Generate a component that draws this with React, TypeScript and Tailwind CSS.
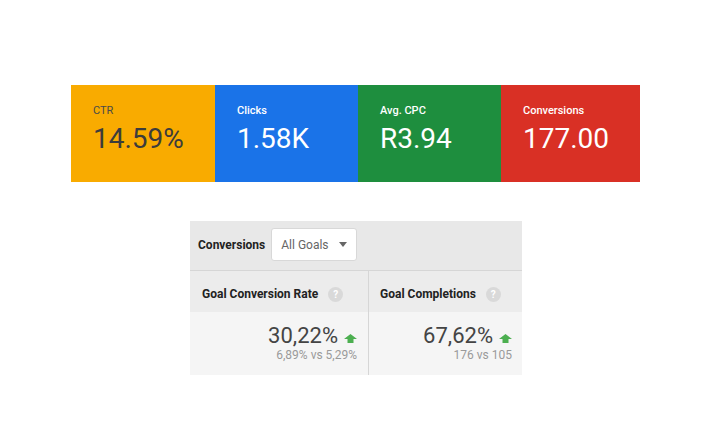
import React from "react";

const cards = [
  { label: "CTR", value: "14.59%", bg: "bg-[#f9ab00]", text: "text-[#3c3c3c]", label2: "text-[#4a4a4a] font-normal", w: "w-[144px]" },
  { label: "Clicks", value: "1.58K", bg: "bg-[#1a73e8]", text: "text-white", label2: "text-white font-medium", w: "w-[143px]" },
  { label: "Avg. CPC", value: "R3.94", bg: "bg-[#1e8e3e]", text: "text-white", label2: "text-white font-medium", w: "w-[143px]" },
  { label: "Conversions", value: "177.00", bg: "bg-[#d93025]", text: "text-white", label2: "text-white font-medium", w: "w-[139px]" },
];

function HelpIcon() {
  return (
    <span className="flex h-[15px] w-[15px] items-center justify-center rounded-full bg-[#d9d9d9] text-[10px] font-bold leading-none text-white">
      ?
    </span>
  );
}

function UpArrow() {
  return (
    <svg width="13" height="9" viewBox="0 0 13 9" className="mb-[6px]">
      <path d="M6.5 0 L13 5 L9.5 5 L9.5 9 L3.5 9 L3.5 5 L0 5 Z" fill="#4caf50" />
    </svg>
  );
}

function StatCell({ value, sub, className }: { value: string; sub: string; className: string }) {
  return (
    <div className={`flex flex-col items-end pt-[11px] ${className}`}>
      <div className="flex items-end gap-[6px]">
        <span className="text-[22px] leading-[26px] text-[#444]">{value}</span>
        <UpArrow />
      </div>
      <span className="text-[12px] leading-[13px] text-[#9a9a9a]">{sub}</span>
    </div>
  );
}

export default function App() {
  return (
    <div className="flex h-[430px] w-[712px] flex-col bg-white font-['Roboto',sans-serif]">
      {/* scorecards */}
      <div className="ml-[71px] mt-[85px] flex h-[97px]">
        {cards.map((c) => (
          <div key={c.label} className={`${c.bg} ${c.w} pl-[22px] pt-[19px]`}>
            <div className={`text-[11px] leading-[13px] ${c.label2}`}>{c.label}</div>
            <div className={`mt-[6px] text-[28px] leading-[32px] ${c.text}`}>{c.value}</div>
          </div>
        ))}
      </div>

      {/* goals table */}
      <div className="ml-[190px] mt-[39px] w-[332px]">
        <div className="flex h-[50px] items-start border-b border-[#d6d6d6] bg-[#e8e8e8] pl-[8px] pt-[7px]">
          <div className="flex h-[33px] items-center text-[12px] font-bold text-[#222]">Conversions</div>
          <div className="ml-[6px] flex h-[33px] w-[86px] items-center justify-between rounded-[3px] border border-[#d8d8d8] bg-white pl-[9px] pr-[9px] text-[12px] text-[#666]">
            <span>All Goals</span>
            <svg width="8" height="5" viewBox="0 0 8 5">
              <path d="M0 0 L8 0 L4 5 Z" fill="#666" />
            </svg>
          </div>
        </div>
        <div className="flex">
          <div className="w-[179px] border-r border-[#d6d6d6]">
            <div className="flex h-[41px] items-start gap-[10px] bg-[#ececec] pl-[12px] pt-[16px]">
              <span className="text-[12px] font-bold leading-[14px] text-[#222]">Goal Conversion Rate</span>
              <HelpIcon />
            </div>
            <StatCell value="30,22%" sub="6,89% vs 5,29%" className="h-[63px] bg-[#f5f5f5] pr-[11px]" />
          </div>
          <div className="flex-1">
            <div className="flex h-[41px] items-start gap-[10px] bg-[#ececec] pl-[11px] pt-[16px]">
              <span className="text-[12px] font-bold leading-[14px] text-[#222]">Goal Completions</span>
              <HelpIcon />
            </div>
            <StatCell value="67,62%" sub="176 vs 105" className="h-[63px] bg-[#f5f5f5] pr-[10px]" />
          </div>
        </div>
      </div>
    </div>
  );
}
